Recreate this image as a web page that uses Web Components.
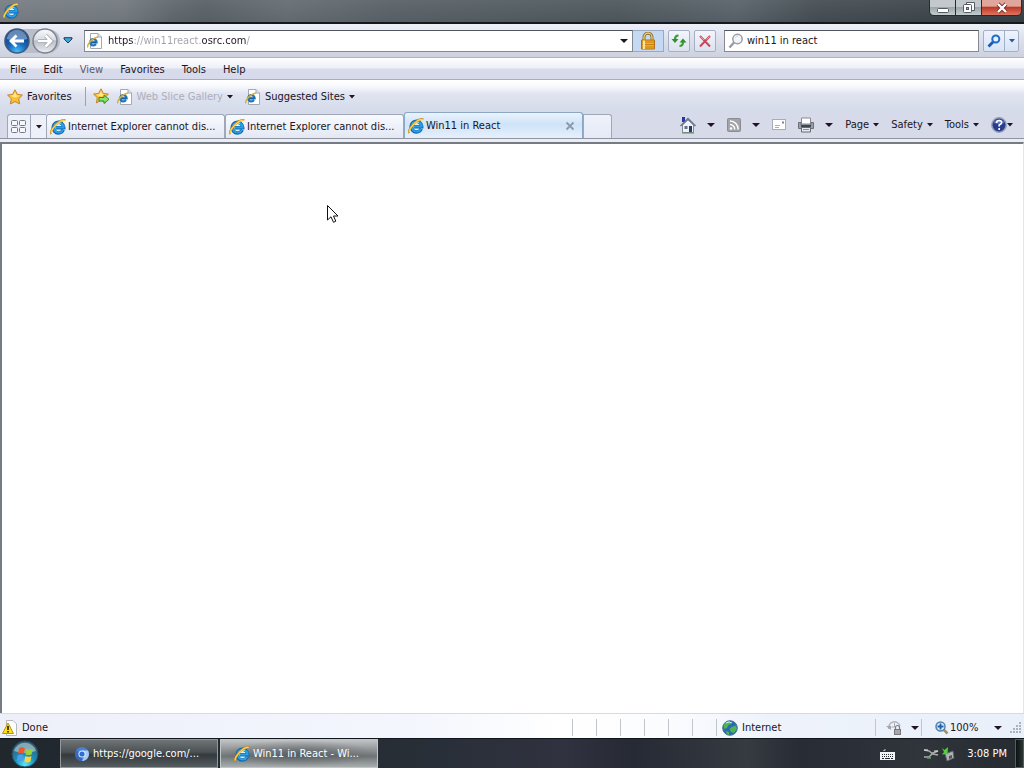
<!DOCTYPE html>
<html lang="en">
<head>
<meta charset="utf-8">
<title>Win11 in React - Windows Internet Explorer</title>
<style>
html, body { margin: 0; height: 100%; }
body { font: 11px/16px "DejaVu Sans Condensed", "DejaVu Sans", sans-serif; color: #201424; background: #23292f; overflow: hidden; }
</style>
</head>
<body>
<desktop-screen></desktop-screen>
<script>
const IE = `<circle cx="8.3" cy="8.8" r="5.2" fill="#d8f2fc"/><path d="M13.3 10.9A5.3 5.3 0 1 1 13.8 8.8H5.5" fill="none" stroke="#0f66b5" stroke-width="3.4"/><path d="M13 10.9A5 5 0 1 1 13.6 8.4H6" fill="none" stroke="#2d9fe0" stroke-width="2"/><path d="M4.2 6.2Q7 3.4 11 4.4" fill="none" stroke="#8edcf8"/><path d="M1.2 15C-.3 13 3.5 7.2 7.5 4 11 1.2 14.4.4 15.1 1.6" fill="none" stroke="#b98212" stroke-width="2"/><path d="M1.3 14.5C.5 12 4 7.3 7.8 4.2 11 1.6 14 .9 14.8 1.6" fill="none" stroke="#ffd24a" stroke-width="1.4"/>`;
const PAGE = `<path d="M3.5.5H11L14.5 4V15.5H3.5Z" fill="#fff" stroke="#a4a8b2"/><path d="M11 .5V4H14.5" fill="#dfe3ea" stroke="#a4a8b2"/>`;
const STAR = `<path d="M8 .8L10.3 5.4 15.4 6.1 11.7 9.7 12.6 14.9 8 12.5 3.4 14.9 4.3 9.7.6 6.1 5.7 5.4Z" fill="#fbc02e" stroke="#c4822c"/><path d="M8 2.8L9.5 6.3 13 6.8 8 8.5 3 6.8 6.4 6.3Z" fill="#ffe88a"/>`;
const ICONS = {
  ie: [16, 16, IE],
  page: [16, 16, PAGE + `<g transform="translate(-.3 2.4) scale(.8)"><path d="M11.6 11A4 4 0 1 1 12.4 8.8H5" fill="none" stroke="#1c76bd" stroke-width="2.8"/><path d="M6 8.8H12" stroke="#1c5a8c" stroke-width="1.6"/><path d="M1.5 15C0 12 6 3.5 14 2" fill="none" stroke="#d9ae3c" stroke-width="1.8"/></g>`],
  star: [16, 16, STAR],
  addstar: [17, 17, STAR + `<path d="M6 9.5H11V7L16 11.3 11 15.5V13H6Z" fill="#8ee26c" stroke="#2f9424"/>`],
  caret: [6, 4, `<path d="M0 0H6L3 3.6Z" fill="currentColor"/>`],
  bigcaret: [8, 4, `<path d="M0 0H8L4 4Z" fill="currentColor"/>`],
  back: [26, 26, `<defs><radialGradient id="b" cx=".5" cy=".95" r=".8"><stop offset="0" stop-color="#45c1ff"/><stop offset=".5" stop-color="#1767b8"/><stop offset="1" stop-color="#16407c"/></radialGradient></defs><circle cx="13" cy="13" r="12" fill="url(#b)" stroke="#40597c" stroke-width="1.5"/><path d="M2.5 11A10.6 10.6 0 0 1 23.5 11Q13 14 2.5 11Z" fill="#a8c4e8" opacity=".55"/><path d="M20 13H7.5M12.5 7.5L7 13 12.5 18.5" fill="none" stroke="#fff" stroke-width="2.8"/>`],
  forward: [26, 26, `<defs><linearGradient id="f" x2="0" y2="1"><stop stop-color="#fafbfd"/><stop offset=".45" stop-color="#d8dce2"/><stop offset=".5" stop-color="#b8bec8"/><stop offset="1" stop-color="#eceef2"/></linearGradient></defs><circle cx="13" cy="13" r="12" fill="url(#f)" stroke="#7e848e" stroke-width="1.5"/><path d="M6 13H18.5M13.5 7.5L19 13 13.5 18.5" fill="none" stroke="#979da7" stroke-width="4"/><path d="M6 13H18.5M13.5 7.5L19 13 13.5 18.5" fill="none" stroke="#fff" stroke-width="2.6"/>`],
  history: [10, 7, `<path d="M1 .7H9L9 2 5 6 1 2Z" fill="#39a6d4" stroke="#233e60"/>`],
  lock: [16, 18, `<path d="M4 8V5A4 3.8 0 0 1 12 5V8" fill="none" stroke="#90702c" stroke-width="3"/><path d="M4 8V5A4 3.8 0 0 1 12 5V8" fill="none" stroke="#f0d68a" stroke-width="1.2"/><path d="M1.5 8H14.5V17H1.5Z" fill="#f0ae28" stroke="#ad741c"/><path d="M2 10H14M2 12.5H14M2 15H14" stroke="#cd8313"/><path d="M4 8.5V17" stroke="#ffe49a" stroke-width="2"/>`],
  refresh: [16, 16, `<path d="M7.5 2.5Q4 2.500 4 6.500" fill="none" stroke="#3a9c30" stroke-width="2.2"/><path d="M.5 6H7.5L4 10Z" fill="#2e9228"/><path d="M8.500 13Q12 13 12 9" fill="none" stroke="#3a9c30" stroke-width="2.2"/><path d="M8.5 9.500H15.500L12 5.500Z" fill="#2e9228"/>`],
  stop: [16, 16, `<path d="M3 3L13 13.5M13 3L3 13.5" stroke="#c84856" stroke-width="2"/><path d="M3.5 3.5L7 7M12.5 3.5L9.5 6.5" stroke="#ee9ca4"/>`],
  glass: [16, 16, `<circle cx="9.5" cy="6" r="4.7" fill="#f4f5f8" stroke="#989ca8" stroke-width="1.5"/><path d="M6 9.5L1.5 14.5" stroke="#989ca8" stroke-width="2.5"/><path d="M7 5Q8 3 10 3" fill="none" stroke="#d0d4dc"/>`],
  search: [14, 14, `<circle cx="8.8" cy="5" r="3.5" fill="#e2f4ff" stroke="#236bc8" stroke-width="2"/><path d="M6 8L1.5 12.5" stroke="#1c58b6" stroke-width="2.8"/>`],
  grid: [16, 14, `<g fill="#f5f7fd" stroke="#737986"><rect x=".5" y=".5" width="6" height="5" rx="1"/><rect x="8.5" y=".5" width="6" height="5" rx="1"/><rect x=".5" y="7.5" width="6" height="5" rx="1"/><rect x="8.5" y="7.5" width="6" height="5" rx="1"/></g>`],
  home: [16, 18, `<path d="M2 1H5V6H2Z" fill="#2938a0"/><path d="M2.5 9L8 4 13.5 9V16.5H2.5Z" fill="#eff2f8" stroke="#818a98"/><path d="M.5 10L8 2.5 15.5 10" fill="none" stroke="#66728a" stroke-width="1.4"/><path d="M9 10H12V16H9Z" fill="#263a72"/><path d="M4.5 10H7.5V13H4.5Z" fill="#656f89"/><path d="M2 17H14" stroke="#688b61"/>`],
  rss: [14, 14, `<rect x=".5" y=".5" width="13" height="13" rx="1" fill="#a2a4aa" stroke="#8b8d93"/><circle cx="4" cy="10.5" r="1.3" fill="#fff"/><path d="M3 6.5A4.8 4.8 0 0 1 7.7 11.5M3 3A8.3 8.3 0 0 1 11.2 11.5" fill="none" stroke="#fff" stroke-width="1.5"/>`],
  mail: [14, 12, `<rect x=".5" y=".5" width="13" height="10" fill="#fff" stroke="#a9acb4"/><path d="M3 6.5H8M3 8.5H7" stroke="#a8adb8"/><path d="M10 2.5H12V4.5H10Z" fill="#7c8494"/>`],
  print: [16, 16, `<path d="M3.5 1H12.5V7H3.5Z" fill="#fff" stroke="#858a94"/><path d="M.5 5.5H3V8H13V5.5H15.5V11.5H.5Z" fill="#9a9fa8" stroke="#6b7079"/><path d="M3 9H13" stroke="#40454f" stroke-width="2"/><path d="M3.5 10.5H12.5V15H3.5Z" fill="#e5e8ee" stroke="#666b76"/><path d="M5 12.5H11" stroke="#8b9098"/>`],
  help: [16, 16, `<circle cx="8" cy="8" r="7.2" fill="#263c8e" stroke="#949eb5" stroke-width="1.5"/><path d="M2.5 6A6 6 0 0 1 13.5 6Q8 8 2.5 6" fill="#7388cc" opacity=".7"/><path d="M5.5 6Q5.5 3.5 8.2 3.5 10.8 3.6 10.6 5.7 10.4 7.2 8.2 8V9.5M8.2 11V13" fill="none" stroke="#fff" stroke-width="1.7"/>`],
  close: [10, 10, `<path d="M1.5 1.5L8.5 8.5M8.5 1.5L1.5 8.5" stroke="#8d98a8" stroke-width="1.8"/>`],
  min: [14, 12, `<rect x="1.5" y="6.5" width="11" height="4" rx="1" fill="#fff" stroke="#555b64"/>`],
  max: [14, 12, `<path d="M4.5.5H12.5V8.5H4.5Z" fill="#fff" stroke="#555b64"/><rect x="1.5" y="2.5" width="8" height="8" rx="1" fill="#fff" stroke="#555b64"/><rect x="4.5" y="5.5" width="2" height="2" fill="#aaa" stroke="#555b64"/>`],
  x: [14, 12, `<path d="M3 2L11 10M11 2L3 10" stroke="#7c2c25" stroke-width="4"/><path d="M3 2L11 10M11 2L3 10" stroke="#fff" stroke-width="2.4"/>`],
  warn: [16, 16, `<path d="M4.5.5H11L14.5 4V15.5H4.5Z" fill="#fff" stroke="#b5b7ba"/><path d="M6 3L11.5 13.5H.5Z" fill="#ffe018" stroke="#bb9300"/><path d="M6 6V10M6 11V12.5" stroke="#111" stroke-width="1.5"/>`],
  globe: [16, 16, `<circle cx="8" cy="8" r="7.3" fill="#2b69b7" stroke="#4a7199"/><path d="M2 4Q5 0 8.5 1.5L9 4 6 5.5 5 8 2 9ZM9.5 7L14 5.5 14.8 9 12 13 9 12 7.5 9ZM4 11L7 12 7 15 4.5 13.5Z" fill="#4db551"/><path d="M4 3Q7 1 10 3" stroke="#c8f1ee" fill="none"/>`],
  privacy: [16, 16, `<path d="M3 9A5.5 5.5 0 1 1 14 6" fill="none" stroke="#b4b6ba" stroke-width="1.5"/><path d="M0 6H5V10Z" fill="#a1a4a8"/><path d="M8.5 3V7H5.5" fill="none" stroke="#a9abb0"/><rect x="8.5" y="9.5" width="6" height="5" fill="#a5a7ac" stroke="#77797e"/><path d="M9.5 9V7.5A2 2 0 0 1 13.5 7.5V9" fill="none" stroke="#77797e" stroke-width="1.2"/>`],
  zoomin: [14, 14, `<path d="M8 8L12.5 12.5" stroke="#a3906c" stroke-width="2.5"/><circle cx="5.5" cy="5.5" r="4.5" fill="#dceffb" stroke="#5781a8" stroke-width="1.5"/><path d="M5.5 2.5V8.5M2.5 5.5H8.5" stroke="#1c62ae" stroke-width="1.8"/>`],
  grip: [12, 12, `<g fill="#aeb3bb"><path d="M9 0H11V2H9ZM9 3H11V5H9ZM6 3H8V5H6ZM3 6H5V8H3ZM6 6H8V8H6ZM9 6H11V8H9ZM0 9H2V11H0ZM3 9H5V11H3ZM6 9H8V11H6ZM9 9H11V11H9Z"/></g>`],
  orb: [28, 28, `<defs><radialGradient id="o" cx=".5" cy=".9" r=".75"><stop offset="0" stop-color="#56e8ff"/><stop offset=".5" stop-color="#1b8fbe"/><stop offset="1" stop-color="#346278"/></radialGradient></defs><circle cx="14" cy="14" r="13" fill="url(#o)" stroke="#28495e"/><path d="M3 11A11.5 11.5 0 0 1 25 11Q14 15 3 11" fill="#c4e2ea" opacity=".55"/><g transform="translate(-1.400 -1.400) scale(1.12)"><path d="M8.5 8.5Q11 7 13.6 8.5L12.8 13.5Q10 12 7.5 13.5Z" fill="#f0572a"/><path d="M15 9Q18 10.5 20.7 9L19.7 14Q17 15.5 14.2 14Z" fill="#9bd238"/><path d="M7.2 15Q10 13.5 12.6 15L11.8 20Q9 18.5 6.4 20Z" fill="#4a9ff0"/><path d="M14 15.5Q17 17 19.5 15.5L18.6 20.5Q16 22 13.1 20.5Z" fill="#fdd33c"/></g>`],
  chromium: [16, 16, `<circle cx="8" cy="8" r="7" fill="#4782d6"/><path d="M8 4.5H14A7 7 0 0 1 8 15L11 9Z" fill="#a9cbf4"/><path d="M8 8L2 4.5A7 7 0 0 0 8 15Z" fill="#3568bd"/><circle cx="8" cy="8" r="3.6" fill="#e4f0ff"/><circle cx="8" cy="8" r="2.6" fill="#2d6ed0"/>`],
  keyboard: [15, 12, `<path d="M3.5 3V2.5H5V1" fill="none" stroke="#b6babf"/><rect y="4" width="15" height="8" fill="#f2f4f5"/><path d="M2 6.5H13M2 8.5H13" stroke="#262b31" stroke-dasharray="1 1"/><path d="M2 10.5H4M5 10.5H10M11 10.5H13" stroke="#262b31"/>`],
  network: [16, 14, `<path d="M1 3L6 4 10 7 15 8M1 10L6 10 10 6 15 4" fill="none" stroke="#a5aaa7" stroke-width="1.5"/><path d="M1 3H5M11 4H15" stroke="#e2e6e3"/><path d="M4 11H8" stroke="#55a658" stroke-width="1.5"/>`],
  device: [14, 16, `<path d="M4 8L12 5 13 12 6 15Z" fill="#aeb3b4" stroke="#5c6365"/><path d="M8 10L11 9V12L8 13Z" fill="#4c5657"/><path d="M1 2L3.5 4 7 1 6.500 8 1 8.5 3 6Z" fill="#4bd338"/>`],
  cursor: [14, 20, `<path d="M1.5 1.5V16L5 12.8 7.5 18.3 9.8 17.2 7.5 12H12Z" fill="#fff" stroke="#111"/>`]
};

const define = (name, css, html) => {
  const template = document.createElement('template');
  template.innerHTML = `<style>*,:host{box-sizing:border-box}button,input{font:inherit;color:inherit;margin:0;padding:0;border:0;background:none}button{display:flex;align-items:center;white-space:nowrap}${css}</style>${html}`;
  customElements.define(name, class extends HTMLElement {
    constructor() {
      super();
      this.attachShadow({ mode: 'open' }).append(template.content.cloneNode(true));
    }
  });
};

customElements.define('ui-icon', class extends HTMLElement {
  constructor() { super(); this.attachShadow({ mode: 'open' }); }
  connectedCallback() {
    const [w, h, body] = ICONS[this.getAttribute('name')];
    this.shadowRoot.innerHTML = `<style>:host{display:block;flex:none}svg{display:block}</style><svg width="${w}" height="${h}" viewBox="0 0 ${w} ${h}" aria-hidden="true">${body}</svg>`;
  }
});

define('menu-button', `
:host{display:block}
button{gap:4px;height:20px}`,
`<button type="button"><slot></slot></button>`);

define('title-bar', `
:host{display:flex;flex:none;justify-content:space-between;align-items:flex-start;height:24px;padding-left:3px;border-bottom:2px solid #14191d;background:linear-gradient(#ffffff14,#ffffff00),linear-gradient(90deg,#747a7f,#70777c 12%,#5c646a 17%,#555e63 20%,#626a6f 28%,#555e64 38%,#4b5559 60%,#565f67 72%,#414a50 80%,#343d43)}
.logo{padding-top:3px}
.controls{display:flex;margin-right:2px}
.controls button{justify-content:center;width:26px;height:16px;border:1px solid #262c31;border-top:0;border-right:0;background:linear-gradient(#c2c8cb 0 45%,#9da6ab 50%,#c3cdd0)}
.controls button:first-child{border-bottom-left-radius:5px}
.controls button:last-child{width:41px;border-right:1px solid #262c31;border-bottom-right-radius:5px;background:linear-gradient(#e0a69b 0 40%,#bd3a27 50%,#de7560)}`,
`<ui-icon class="logo" name="ie"></ui-icon>
<div class="controls"><button type="button" aria-label="Minimize"><ui-icon name="min"></ui-icon></button><button type="button" aria-label="Restore"><ui-icon name="max"></ui-icon></button><button type="button" aria-label="Close"><ui-icon name="x"></ui-icon></button></div>`);

define('nav-bar', `
:host{display:flex;flex:none;align-items:center;height:33px;padding:0 5px 0 4px;background:linear-gradient(#eef0f8,#dde0ed 45%,#cdd2de)}
.travel{display:flex;align-items:center;gap:2px;padding-right:2px;border-radius:14px;background:#b9bfca;height:24px}
.recent{width:12px;margin:0 9px 0 3px}
.field{display:flex;align-items:center;height:22px;background:#fff;border:1px solid #858a92;border-top-color:#50555e}
.address{flex:1;padding-left:2px;gap:5px}
.address input{flex:1;min-width:0;height:18px;outline:0;color:#201424;-webkit-text-fill-color:transparent;background:linear-gradient(90deg,#201424 26px,#a3a1a8 26px 93px,#201424 93px 138px,#a3a1a8 138px);-webkit-background-clip:text;background-clip:text}
.drop{height:20px;padding:0 4px}
.cert{height:22px;width:31px;justify-content:center;background:#c5d9f2;border:1px solid #98a9c3;border-left:0}
.tool{width:22px;height:22px;justify-content:center;border:1px solid #a5b0c4;border-radius:2px;background:linear-gradient(#f2f5fb,#dce2f0);margin-left:4px}
.find{width:255px;margin-left:8px;padding-left:3px;gap:3px}
.find input{flex:1;min-width:0;outline:0}
.split{display:flex;margin-left:4px;height:22px;border:1px solid #a5b0c4;border-radius:2px;background:linear-gradient(#eef4fd,#d8e3f6);color:#245a9e}
.split button{justify-content:center;width:20px}
.split button+button{width:14px;border-left:1px solid #a5b0c4}`,
`<div class="travel"><button type="button" aria-label="Back"><ui-icon name="back"></ui-icon></button><button type="button" aria-label="Forward"><ui-icon name="forward"></ui-icon></button></div>
<button class="recent" type="button" aria-label="Recent pages"><ui-icon name="history"></ui-icon></button>
<div class="field address"><ui-icon name="page"></ui-icon><input type="text" aria-label="Address" value="https://win11react.osrc.com/"><button class="drop" type="button" aria-label="Show addresses"><ui-icon name="bigcaret"></ui-icon></button></div>
<button class="cert" type="button" aria-label="Security report"><ui-icon name="lock"></ui-icon></button>
<button class="tool" type="button" aria-label="Refresh"><ui-icon name="refresh"></ui-icon></button>
<button class="tool" type="button" aria-label="Stop"><ui-icon name="stop"></ui-icon></button>
<div class="field find"><ui-icon name="glass"></ui-icon><input type="text" aria-label="Search" value="win11 in react"></div>
<div class="split"><button type="button" aria-label="Search"><ui-icon name="search"></ui-icon></button><button type="button" aria-label="Search options"><ui-icon name="caret"></ui-icon></button></div>`);

define('menu-bar', `
:host{display:flex;flex:none;align-items:center;gap:17px;height:23px;padding:2px 10px 0;border-top:1px solid #aeb3bd;border-bottom:1px solid #a9aebc;background:linear-gradient(#fff,#eeeff8 45%,#d8dbea 55%,#d6daea)}
.dim{color:#5f5a68}`,
`<menu-button>File</menu-button><menu-button>Edit</menu-button><menu-button class="dim">View</menu-button><menu-button>Favorites</menu-button><menu-button>Tools</menu-button><menu-button>Help</menu-button>`);

define('favorites-bar', `
:host{display:flex;flex:none;align-items:center;height:33px;padding:0 7px;background:linear-gradient(#fff,#fafbfe 15%,#dfe3f0 45%,#d5daea)}
.rule{width:1px;height:19px;background:#9da2ae;margin:0 7px 0 13px}
.off{color:#adaeba;margin:0 12px 0 7px}
.off .arrow{color:#201424}`,
`<menu-button><ui-icon name="star"></ui-icon>Favorites</menu-button><span class="rule"></span>
<button type="button" aria-label="Add to Favorites Bar"><ui-icon name="addstar"></ui-icon></button>
<menu-button class="off"><ui-icon name="page"></ui-icon>Web Slice Gallery<ui-icon class="arrow" name="caret"></ui-icon></menu-button>
<menu-button><ui-icon name="page"></ui-icon>Suggested Sites<ui-icon name="caret"></ui-icon></menu-button>`);

define('page-tab', `
:host{display:flex;align-items:center;flex:0 1 179px;min-width:0;height:24px;padding:0 5px 0 3px;border:1px solid #a0a8b8;border-bottom:0;border-radius:3px 3px 0 0;background:linear-gradient(#f8faff,#e3e8f4)}
:host([active]){height:26px;border-color:#8ba7c4;background:linear-gradient(#eaf3fd,#cfe3f8 45%,#e6f0fc)}
.title{flex:1;gap:2px;min-width:0;height:22px}
:host([active]) .x{display:flex}
.x{display:none;padding:0 2px}`,
`<button class="title" type="button"><ui-icon name="ie"></ui-icon><slot></slot></button><button class="x" type="button" aria-label="Close tab"><ui-icon name="close"></ui-icon></button>`);

define('tab-strip', `
:host{display:flex;flex:none;justify-content:space-between;align-items:flex-end;height:26px;padding:0 11px 0 7px;background:#d6dae9;border-bottom:1px solid #8f949f}
.tabs{display:flex;align-items:flex-end;flex:1;min-width:0}
.quick{display:flex;height:24px;border:1px solid #a0a8b8;border-bottom:0;border-right:0;border-radius:3px 0 0 0;background:#edf0f9}
.quick button{width:22px;justify-content:center}
.quick button+button{width:16px;border-left:1px solid #a0a8b8}
.new{width:29px;height:24px;border:1px solid #a0a8b8;border-bottom:0;border-radius:0 3px 0 0;background:linear-gradient(#eff2fb,#e5eaf6)}
.commands{display:flex;align-items:center;gap:12px;height:26px}
.pair{gap:11px}`,
`<div class="tabs"><div class="quick"><button type="button" aria-label="Quick tabs"><ui-icon name="grid"></ui-icon></button><button type="button" aria-label="Tab list"><ui-icon name="caret"></ui-icon></button></div>
<page-tab>Internet Explorer cannot dis...</page-tab><page-tab>Internet Explorer cannot dis...</page-tab><page-tab active>Win11 in React</page-tab><button class="new" type="button" aria-label="New tab"></button></div>
<div class="commands"><button class="pair" type="button" aria-label="Home"><ui-icon name="home"></ui-icon><ui-icon name="bigcaret"></ui-icon></button><button class="pair" type="button" aria-label="Feeds"><ui-icon name="rss"></ui-icon><ui-icon name="bigcaret"></ui-icon></button><button type="button" aria-label="Read mail"><ui-icon name="mail"></ui-icon></button><button class="pair" type="button" aria-label="Print"><ui-icon name="print"></ui-icon><ui-icon name="bigcaret"></ui-icon></button><menu-button>Page<ui-icon name="caret"></ui-icon></menu-button><menu-button>Safety<ui-icon name="caret"></ui-icon></menu-button><menu-button>Tools<ui-icon name="caret"></ui-icon></menu-button><button type="button" aria-label="Help"><ui-icon name="help"></ui-icon><ui-icon name="caret"></ui-icon></button></div>`);

define('page-view', `
:host{display:block;position:relative;flex:1;min-height:0;background:#fff;border:solid #777b83;border-width:2px 1px 0 2px;border-right-color:#e2e5ea;box-shadow:0 -3px #e9edf6;margin-top:3px}
.pointer{position:absolute;left:324px;top:60px}`,
`<ui-icon class="pointer" name="cursor"></ui-icon>`);

define('status-bar', `
:host{display:flex;flex:none;align-items:center;height:25px;border-top:1px solid #d4dcdf;padding:3px 2px 0;background:linear-gradient(90deg,#edf0f9,#f3f6fd 40%,#fff 55%,#fbfcfe 65%,#eef3fb 75%,#e9f0fa)}
.message{display:flex;align-items:center;gap:4px;flex:1}
.cell{width:24px;height:17px;border-left:1px solid #c1c6cd}
.zone{display:flex;align-items:center;gap:4px;width:159px;height:17px;padding-left:5px;border-left:1px solid #c1c6cd}
.privacy,.zoom{display:flex;align-items:center;justify-content:space-between;height:17px;border-left:1px solid #c1c6cd}
.privacy{width:46px;padding:0 2px 0 10px}
.zoom{width:89px;padding:0 8px 0 13px}
.zoom span{display:flex;align-items:center;gap:1px}`,
`<div class="message"><ui-icon name="warn"></ui-icon>Done</div><div class="cell"></div><div class="cell"></div><div class="cell"></div><div class="cell"></div><div class="cell"></div><div class="cell"></div>
<div class="zone"><ui-icon name="globe"></ui-icon>Internet</div>
<button class="privacy" type="button" aria-label="Privacy"><ui-icon name="privacy"></ui-icon><ui-icon name="bigcaret"></ui-icon></button>
<button class="zoom" type="button"><span><ui-icon name="zoomin"></ui-icon>100%</span><ui-icon name="bigcaret"></ui-icon></button><ui-icon name="grip"></ui-icon>`);

define('task-button', `
:host{display:block;width:158px;height:29px}
button{width:100%;height:100%;gap:3px;padding-left:13px;border:1px solid #92989b;color:#fff;background:linear-gradient(#6f7477,#4a5053 45%,#34393d 55%,#555d60)}
:host([active]) button{border-color:#c1c6c6;background:radial-gradient(ellipse at 50% 50%,#44484b90,#ffffff00 70%),linear-gradient(#c1c4c5,#85898b 45%,#6f7476 60%,#a8adae)}`,
`<button type="button"><slot></slot></button>`);

define('task-bar', `
:host{display:flex;flex:none;align-items:center;height:30px;border-top:1px solid #11161c;color:#fff;background:linear-gradient(90deg,#20282e,#272e36 40%,#30323f 55%,#262a34 62%,#363b42 73%,#272c35 78%,#30343b 90%,#252b31)}
.start{width:60px;height:29px;padding-left:11px}
.apps{display:flex;gap:2px;flex:1}
.tray{display:flex;align-items:center;height:29px}
.keys{margin-right:28px}
.net{margin-right:2px}
.clock{margin:0 8px 0 12px}
.peek{width:9px;height:29px;border:1px solid #535c60;background:linear-gradient(90deg,#0b1212,#2b3533)}`,
`<button class="start" type="button" aria-label="Start"><ui-icon name="orb"></ui-icon></button>
<div class="apps"><task-button><ui-icon name="chromium"></ui-icon>https://google.com/...</task-button><task-button active><ui-icon name="ie"></ui-icon>Win11 in React - Wi...</task-button></div>
<div class="tray"><ui-icon class="keys" name="keyboard"></ui-icon><ui-icon class="net" name="network"></ui-icon><ui-icon name="device"></ui-icon><time class="clock">3:08 PM</time><button class="peek" type="button" aria-label="Show desktop"></button></div>`);

define('desktop-screen', `
:host{display:flex;flex-direction:column;height:100%}`,
`<title-bar></title-bar><nav-bar></nav-bar><menu-bar></menu-bar><favorites-bar></favorites-bar><tab-strip></tab-strip><page-view></page-view><status-bar></status-bar><task-bar></task-bar>`);
</script>
</body>
</html>
